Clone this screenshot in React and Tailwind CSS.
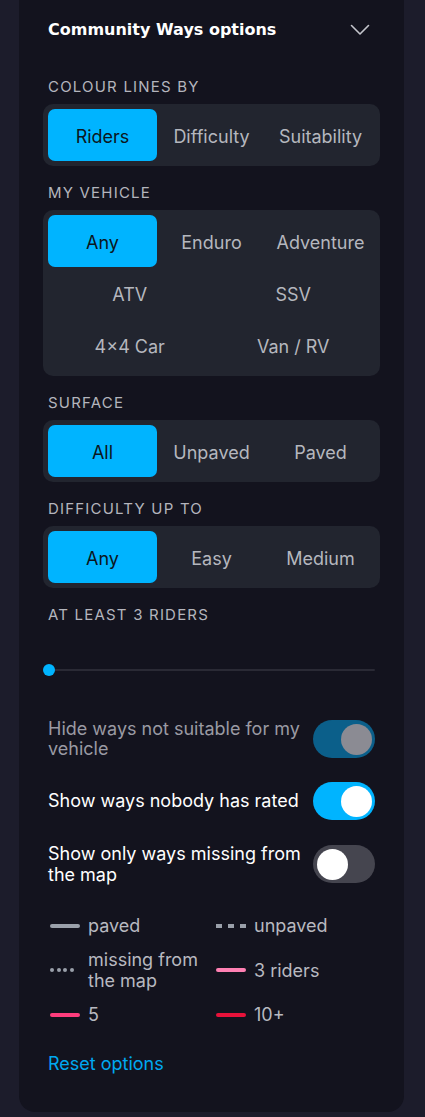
import React from "react";

const font = { fontFamily: "Inter, 'Noto Sans', sans-serif" };

function Label({ children, className = "" }) {
  return (
    <div className={"ml-[5px] h-5 pt-px text-[15px] leading-5 uppercase tracking-[0.08em] text-[#b4b5bd] " + className}>
      {children}
    </div>
  );
}

function Seg({ items, active = 0 }) {
  return (
    <div className="mt-2 rounded-[10px] bg-[#22252f] p-[5px] grid grid-cols-3">
      {items.map((t, i) => (
        <div
          key={t}
          className={
            "h-[52px] pt-[2px] flex items-center justify-center rounded-[7px] text-[18px] " +
            (i === active ? "bg-[#00b4ff] text-[#0c1620]" : "text-[#b5b7be]")
          }
        >
          {t}
        </div>
      ))}
    </div>
  );
}

function Toggle({ state }) {
  const bg = state === "dim" ? "bg-[#0b5f8a]" : state === "on" ? "bg-[#00b4ff]" : "bg-[#45454f]";
  const thumb = state === "dim" ? "bg-[#8b8b93]" : "bg-white";
  const just = state === "off" ? "justify-start" : "justify-end";
  return (
    <div className={"shrink-0 w-[62px] h-[38px] rounded-full p-[3.5px] flex items-center " + bg + " " + just}>
      <div className={"w-[31px] h-[31px] rounded-full " + thumb}></div>
    </div>
  );
}

function Swatch({ kind, color }) {
  if (kind === "dash") {
    return (
      <div className="w-[30px] h-[4px] ml-[2px] flex gap-[6px] shrink-0 overflow-hidden">
        <div className="w-[6px] h-full bg-[#9aa0aa] shrink-0"></div>
        <div className="w-[6px] h-full bg-[#9aa0aa] shrink-0"></div>
        <div className="w-[6px] h-full bg-[#9aa0aa] shrink-0"></div>
      </div>
    );
  }
  if (kind === "dot") {
    return (
      <div className="w-[30px] ml-[2px] flex gap-[2.7px] shrink-0">
        {[0, 1, 2, 3].map((i) => (
          <div key={i} className="w-[4px] h-[4px] rounded-full bg-[#9aa0aa]"></div>
        ))}
      </div>
    );
  }
  return <div className="w-[30px] h-[4px] ml-[2px] rounded-full shrink-0" style={{ background: color }}></div>;
}

function LegendItem({ kind, color, children }) {
  return (
    <div className="flex items-center gap-2 text-[18px] leading-[21px] text-[#b8b9c0]">
      <Swatch kind={kind} color={color} />
      <div>{children}</div>
    </div>
  );
}

export default function App() {
  return (
    <div className="min-h-[1117px] w-[425px] bg-[#1c1c2b]" style={font}>
      <div className="ml-[19px] w-[385px] bg-[#13131e] rounded-b-2xl px-6 pb-[38px]">
        <div className="h-[60px] flex items-center justify-between">
          <div
            className="ml-[5px] text-[16px] font-bold text-white"
            style={{ fontFamily: "'DejaVu Sans', sans-serif" }}
          >
            Community Ways options
          </div>
          <svg width="20" height="12" viewBox="0 0 20 12" className="mr-[10px]" fill="none">
            <path d="M1.5 1.5 L10 10 L18.5 1.5" stroke="#c4c5cc" strokeWidth="1.6" strokeLinecap="round" strokeLinejoin="round" />
          </svg>
        </div>

        <Label className="mt-4">Colour lines by</Label>
        <Seg items={["Riders", "Difficulty", "Suitability"]} />

        <Label className="mt-4">My vehicle</Label>
        <div className="mt-2 rounded-[10px] bg-[#22252f] p-[5px]">
          <div className="grid grid-cols-3">
            {["Any", "Enduro", "Adventure"].map((t, i) => (
              <div
                key={t}
                className={
                  "h-[52px] pt-[2px] flex items-center justify-center rounded-[7px] text-[18px] " +
                  (i === 0 ? "bg-[#00b4ff] text-[#0c1620]" : "text-[#b5b7be]")
                }
              >
                {t}
              </div>
            ))}
          </div>
          <div className="grid grid-cols-2">
            {["ATV", "SSV", "4×4 Car", "Van / RV"].map((t) => (
              <div key={t} className="h-[52px] pt-[2px] flex items-center justify-center text-[18px] text-[#b5b7be]">
                {t}
              </div>
            ))}
          </div>
        </div>

        <Label className="mt-4">Surface</Label>
        <Seg items={["All", "Unpaved", "Paved"]} />

        <Label className="mt-4">Difficulty up to</Label>
        <Seg items={["Any", "Easy", "Medium"]} />

        <Label className="mt-4">At least 3 riders</Label>
        <div className="mt-10 ml-[5px] mr-[5px] h-3 relative flex items-center">
          <div className="w-full h-[2px] bg-[#2a2a35] rounded-full"></div>
          <div className="absolute left-[-5px] top-0 w-3 h-3 rounded-full bg-[#00b4ff]"></div>
        </div>

        <div className="mt-[43px] ml-[5px] mr-[5px] flex flex-col gap-[23px]">
          <div className="flex items-center justify-between gap-3">
            <div className="text-[18px] leading-5 text-[#9a9aa3]">Hide ways not suitable for my vehicle</div>
            <Toggle state="dim" />
          </div>
          <div className="flex items-center justify-between gap-3">
            <div className="text-[18px] leading-5 text-white">Show ways nobody has rated</div>
            <Toggle state="on" />
          </div>
          <div className="flex items-center justify-between gap-3">
            <div className="text-[18px] leading-[21px] text-white">Show only ways missing from the map</div>
            <Toggle state="off" />
          </div>
        </div>

        <div className="mt-[30px] ml-[5px] grid grid-cols-2 gap-y-[13px]">
          <LegendItem kind="solid" color="#9aa0aa">paved</LegendItem>
          <LegendItem kind="dash">unpaved</LegendItem>
          <LegendItem kind="dot">missing from the map</LegendItem>
          <LegendItem kind="solid" color="#ff80b3">3 riders</LegendItem>
          <LegendItem kind="solid" color="#ff3d7d">5</LegendItem>
          <LegendItem kind="solid" color="#e8123a">10+</LegendItem>
        </div>

        <div className="mt-[29px] ml-[5px] text-[18px] leading-5 text-[#00a8f0]">Reset options</div>
      </div>
    </div>
  );
}
